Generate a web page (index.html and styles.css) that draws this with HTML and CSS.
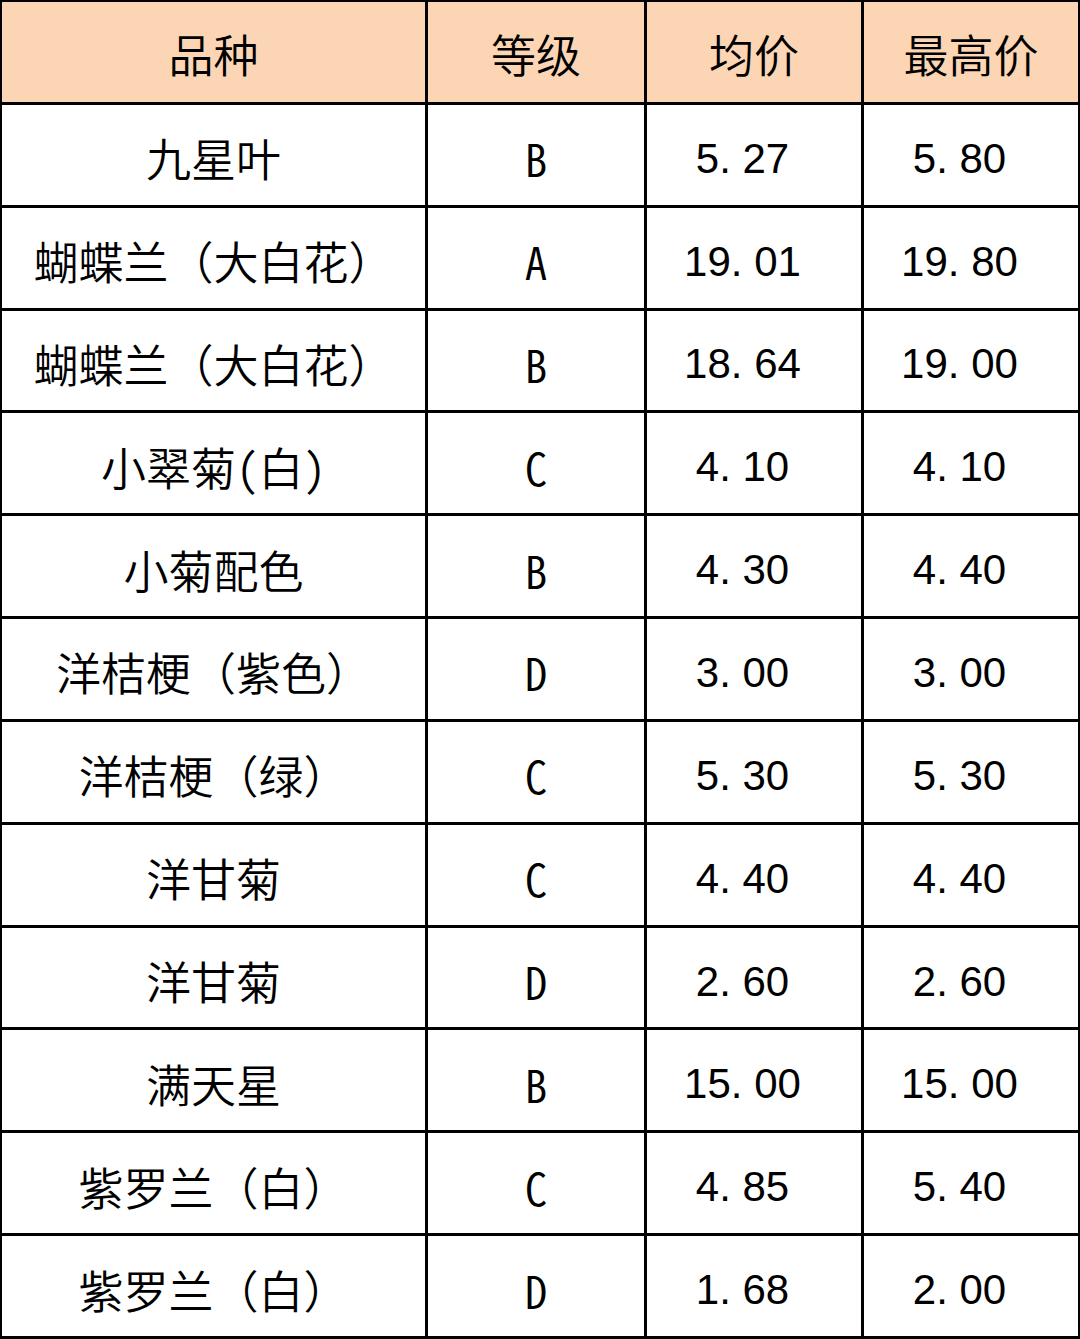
FILE: index.html
```html
<!DOCTYPE html>
<html lang="zh-CN">
<head>
<meta charset="utf-8">
<link rel="stylesheet" href="styles.css">
</head>
<body>
<div class="table">
  <div class="cell head">品种</div><div class="cell head">等级</div><div class="cell head">均价</div><div class="cell head">最高价</div>
  <div class="cell name">九星叶</div><div class="cell grade">B</div><div class="cell num">5. 27</div><div class="cell num">5. 80</div>
  <div class="cell name">蝴蝶兰（大白花）</div><div class="cell grade">A</div><div class="cell num">19. 01</div><div class="cell num">19. 80</div>
  <div class="cell name">蝴蝶兰（大白花）</div><div class="cell grade">B</div><div class="cell num">18. 64</div><div class="cell num">19. 00</div>
  <div class="cell name hw">小翠菊(白)</div><div class="cell grade">C</div><div class="cell num">4. 10</div><div class="cell num">4. 10</div>
  <div class="cell name">小菊配色</div><div class="cell grade">B</div><div class="cell num">4. 30</div><div class="cell num">4. 40</div>
  <div class="cell name">洋桔梗（紫色）</div><div class="cell grade">D</div><div class="cell num">3. 00</div><div class="cell num">3. 00</div>
  <div class="cell name">洋桔梗（绿）</div><div class="cell grade">C</div><div class="cell num">5. 30</div><div class="cell num">5. 30</div>
  <div class="cell name">洋甘菊</div><div class="cell grade">C</div><div class="cell num">4. 40</div><div class="cell num">4. 40</div>
  <div class="cell name">洋甘菊</div><div class="cell grade">D</div><div class="cell num">2. 60</div><div class="cell num">2. 60</div>
  <div class="cell name">满天星</div><div class="cell grade">B</div><div class="cell num">15. 00</div><div class="cell num">15. 00</div>
  <div class="cell name">紫罗兰（白）</div><div class="cell grade">C</div><div class="cell num">4. 85</div><div class="cell num">5. 40</div>
  <div class="cell name">紫罗兰（白）</div><div class="cell grade">D</div><div class="cell num">1. 68</div><div class="cell num">2. 00</div>
</div>
</body>
</html>
```

FILE: styles.css
```css
html, body {
  margin: 0;
  padding: 0;
  background: #ffffff;
}
.table {
  box-sizing: border-box;
  width: 1080px;
  height: 1339px;
  display: grid;
  grid-template-columns: 423px 216px 214px 214px;
  grid-template-rows: repeat(13, 1fr);
  gap: 3px;
  padding: 2px 3px 3px 2px;
  background: #000000;
}
.cell {
  background: #ffffff;
  display: flex;
  align-items: center;
  justify-content: center;
  font-family: "Noto Sans CJK SC", "Noto Sans", sans-serif;
  font-size: 45px;
  font-weight: 350;
  color: #000000;
  white-space: pre;
  padding-top: 6px;
  box-sizing: border-box;
}
.head {
  background: #fcd5b4;
  padding-top: 4px;
}
.hw,
.grade {
  font-feature-settings: "hwid" 1;
}
.num {
  font-family: "Liberation Sans", Arial, sans-serif;
  font-weight: 400;
  font-size: 42px;
  padding-top: 8px;
  padding-right: 23px;
}
```
